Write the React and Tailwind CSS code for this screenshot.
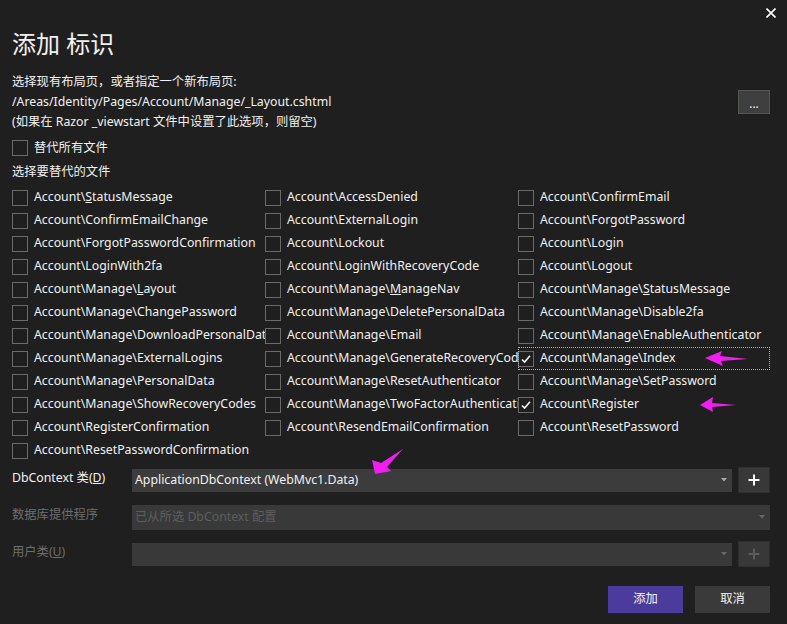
import React from "react";

const rows = [
  [["Account\\", "S", "tatusMessage"], ["Account\\AccessDenied"], ["Account\\ConfirmEmail"]],
  [["Account\\ConfirmEmailChange"], ["Account\\ExternalLogin"], ["Account\\ForgotPassword"]],
  [["Account\\ForgotPasswordConfirmation"], ["Account\\Lockout"], ["Account\\Login"]],
  [["Account\\LoginWith2fa"], ["Account\\LoginWithRecoveryCode"], ["Account\\Logout"]],
  [["Account\\Manage\\", "L", "ayout"], ["Account\\Manage\\", "M", "anageNav"], ["Account\\Manage\\", "S", "tatusMessage"]],
  [["Account\\Manage\\ChangePassword"], ["Account\\Manage\\DeletePersonalData"], ["Account\\Manage\\Disable2fa"]],
  [["Account\\Manage\\DownloadPersonalData"], ["Account\\Manage\\Email"], ["Account\\Manage\\EnableAuthenticator"]],
  [["Account\\Manage\\ExternalLogins"], ["Account\\Manage\\GenerateRecoveryCodes"], ["Account\\Manage\\Index"]],
  [["Account\\Manage\\PersonalData"], ["Account\\Manage\\ResetAuthenticator"], ["Account\\Manage\\SetPassword"]],
  [["Account\\Manage\\ShowRecoveryCodes"], ["Account\\Manage\\TwoFactorAuthentication"], ["Account\\Register"]],
  [["Account\\RegisterConfirmation"], ["Account\\ResendEmailConfirmation"], ["Account\\ResetPassword"]],
  [["Account\\ResetPasswordConfirmation"]],
];

const checked = new Set(["Account\\Manage\\Index", "Account\\Register"]);
const focused = "Account\\Manage\\Index";

function Box({ on }) {
  return (
    <span className="w-[16px] h-[16px] shrink-0 border border-[#6a6a6a] bg-[#1f1f1f] flex items-center justify-center">
      {on && (
        <svg width="12" height="12" viewBox="0 0 12 12">
          <path d="M2 6.5 L4.6 9 L10 2.8" fill="none" stroke="#f4f4f4" strokeWidth="1.6" />
        </svg>
      )}
    </span>
  );
}

function Caret({ dim }) {
  return (
    <svg width="6" height="4" viewBox="0 0 6 4" className="shrink-0">
      <path d="M0 0 L6 0 L3 3.5 Z" fill={dim ? "#6a6a6a" : "#a8a8a8"} />
    </svg>
  );
}

function Plus({ dim }) {
  return (
    <div className="w-[32px] h-[26px] bg-[#383838] border border-[#2e2e2e] flex items-center justify-center">
      <svg width="12" height="12" viewBox="0 0 12 12">
        <path d="M6 0.5 V11.5 M0.5 6 H11.5" stroke={dim ? "#5c5c5c" : "#ffffff"} strokeWidth="2" />
      </svg>
    </div>
  );
}

export default function App() {
  return (
    <div
      className="relative w-[787px] h-[624px] bg-[#1f1f1f] text-[#f1f1f1] overflow-hidden text-[12.3px]"
      style={{ fontFamily: '"Noto Sans", "Noto Sans CJK SC", sans-serif' }}
    >
      <div className="h-[28px] flex justify-end items-start pt-[8px] pr-[11px]">
        <svg width="10" height="10" viewBox="0 0 10 10">
          <path d="M0.5 0.5 L9.5 9.5 M9.5 0.5 L0.5 9.5" stroke="#ffffff" strokeWidth="1.6" />
        </svg>
      </div>
      <div className="pl-[12px] text-[24px] leading-[32px]">添加 标识</div>

      <div className="mt-[12px] pl-[12px] pr-[17px] flex items-start justify-between">
        <div className="leading-[20px]">
          <div>选择现有布局页，或者指定一个新布局页:</div>
          <div>/Areas/Identity/Pages/Account/Manage/_Layout.cshtml</div>
          <div>(如果在 Razor _viewstart 文件中设置了此选项，则留空)</div>
        </div>
        <div className="mt-[18px] w-[32px] h-[24px] bg-[#3f3f3f] border border-[#555555] flex items-end justify-center pb-[3px] leading-[12px] text-[12px]">
          ...
        </div>
      </div>

      <div className="mt-[6px] pl-[12px] h-[20px] flex items-center gap-[6px]">
        <Box />
        <span>替代所有文件</span>
      </div>
      <div className="mt-[4px] pl-[12px] h-[20px] flex items-center">选择要替代的文件</div>

      <div className="mt-[4px] ml-[12px] grid grid-cols-[253px_253px_252px]">
        {rows.flatMap((r, ri) =>
          r.map((it, ci) => {
            const full = it.join("");
            const isFocus = full === focused;
            return (
              <div
                key={ri + "-" + ci}
                className={
                  "h-[23px] flex items-center gap-[6px] overflow-hidden whitespace-nowrap" +
                  (isFocus ? " outline outline-1 outline-dotted outline-[#b0b0b0] -outline-offset-1" : "")
                }
              >
                <Box on={checked.has(full)} />
                <span>
                  {it[0]}
                  {it[1] && <span className="underline underline-offset-1">{it[1]}</span>}
                  {it[2]}
                </span>
              </div>
            );
          })
        )}
      </div>

      <div className="mt-[5px] pl-[12px] pr-[17px] flex flex-col gap-[11px]">
        <div className="h-[26px] flex items-center">
          <div className="w-[120px] pb-[4px]">
            DbContext 类(<span className="underline underline-offset-1">D</span>)
          </div>
          <div className="w-[600px] h-[23px] bg-[#3c3c3c] flex items-center justify-between pl-[3px] pr-[5px]">
            <span>ApplicationDbContext (WebMvc1.Data)</span>
            <Caret />
          </div>
          <div className="ml-[6px]">
            <Plus />
          </div>
        </div>
        <div className="h-[26px] flex items-center">
          <div className="w-[120px] pb-[4px] text-[#6e6e6e]">数据库提供程序</div>
          <div className="flex-1 h-[25px] bg-[#393939] flex items-center justify-between pl-[3px] pr-[5px] text-[#5e5e5e]">
            <span>已从所选 DbContext 配置</span>
            <Caret dim />
          </div>
        </div>
        <div className="h-[26px] flex items-center">
          <div className="w-[120px] pb-[4px] text-[#6e6e6e]">
            用户类(<span className="underline underline-offset-1">U</span>)
          </div>
          <div className="w-[600px] h-[23px] bg-[#393939] flex items-center justify-end pl-[3px] pr-[5px]">
            <Caret dim />
          </div>
          <div className="ml-[6px]">
            <Plus dim />
          </div>
        </div>
      </div>

      <div className="mt-[19px] pr-[17px] flex justify-end gap-[12px]">
        <div className="w-[75px] h-[27px] bg-[#4b3b9c] flex items-center justify-center">添加</div>
        <div className="w-[75px] h-[27px] bg-[#3a3a3a] flex items-center justify-center">取消</div>
      </div>

      <svg className="absolute left-0 top-0 pointer-events-none" width="787" height="624" viewBox="0 0 787 624">
        <polygon points="705,358 722,351 720,356 748,359 721,361 723,366" fill="#f01ef0" />
        <polygon points="700,405 713,397 712,403 736,405 712,407 713,412" fill="#f01ef0" />
        <polygon points="375,474 372,460 381,463 403,449 387,467 391,471" fill="#f01ef0" />
      </svg>
    </div>
  );
}
